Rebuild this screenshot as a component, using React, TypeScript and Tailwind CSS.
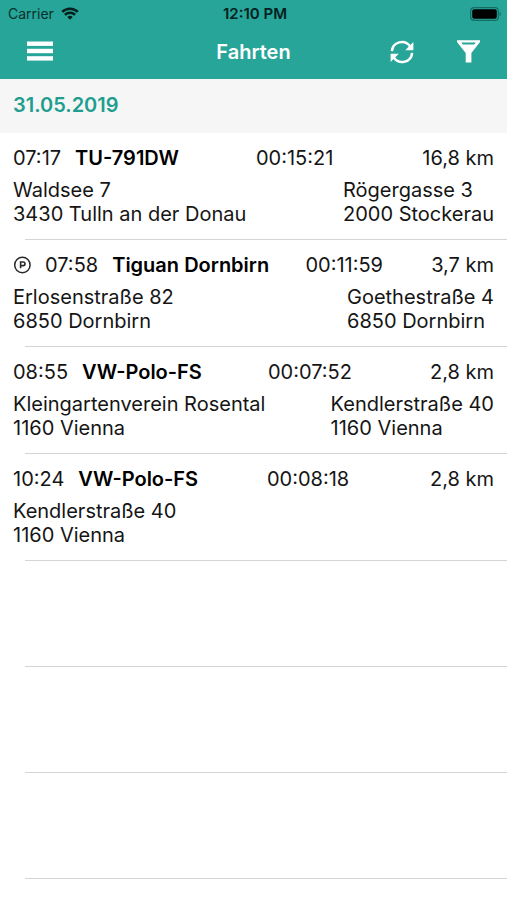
type Trip = {
  time: string;
  vehicle: string;
  duration: string;
  distance: string;
  from: string[];
  to?: string[];
  parked?: boolean;
};

const trips: Trip[] = [
  {
    time: "07:17",
    vehicle: "TU-791DW",
    duration: "00:15:21",
    distance: "16,8 km",
    from: ["Waldsee 7", "3430 Tulln an der Donau"],
    to: ["Rögergasse 3", "2000 Stockerau"],
  },
  {
    time: "07:58",
    vehicle: "Tiguan Dornbirn",
    duration: "00:11:59",
    distance: "3,7 km",
    from: ["Erlosenstraße 82", "6850 Dornbirn"],
    to: ["Goethestraße 4", "6850 Dornbirn"],
    parked: true,
  },
  {
    time: "08:55",
    vehicle: "VW-Polo-FS",
    duration: "00:07:52",
    distance: "2,8 km",
    from: ["Kleingartenverein Rosental", "1160 Vienna"],
    to: ["Kendlerstraße 40", "1160 Vienna"],
  },
  {
    time: "10:24",
    vehicle: "VW-Polo-FS",
    duration: "00:08:18",
    distance: "2,8 km",
    from: ["Kendlerstraße 40", "1160 Vienna"],
  },
];

const emptyRows = [0, 1, 2];

export default function App() {
  return (
    <div className="min-h-screen bg-white font-['Inter',sans-serif] text-[#151515]">
      <header className="bg-[#27a599] pb-[3px]">
        <StatusBar />
        <NavBar />
      </header>
      <main>
        <h2 className="bg-[#f6f6f6] px-[13px] pt-[14px] pb-4 text-[20px] leading-6 font-semibold text-[#1f9e8f]">
          31.05.2019
        </h2>
        <ul>
          {trips.map((trip) => (
            <TripRow key={trip.time} trip={trip} />
          ))}
          {emptyRows.map((row) => (
            <li key={row} className="ml-[25px] h-[106px] border-b border-[#d4d4d6]" />
          ))}
        </ul>
      </main>
    </div>
  );
}

function StatusBar() {
  return (
    <div className="grid h-[27px] grid-cols-3 items-center pr-[5px] pl-2 leading-4 text-[#06302c]">
      <div className="flex items-center gap-[7px]">
        <span className="text-[14px]">Carrier</span>
        <WifiIcon />
      </div>
      <div className="text-center text-[15px] font-semibold text-[#04211e]">12:10 PM</div>
      <div className="flex justify-end">
        <BatteryIcon />
      </div>
    </div>
  );
}

function NavBar() {
  return (
    <nav className="grid h-[49px] grid-cols-3 items-center px-[27px] text-white">
      <button type="button" aria-label="Menü" className="justify-self-start">
        <MenuIcon />
      </button>
      <h1 className="text-center text-[20px] leading-6 font-semibold">Fahrten</h1>
      <div className="flex items-center justify-end gap-[43px]">
        <button type="button" aria-label="Aktualisieren">
          <RefreshIcon />
        </button>
        <button type="button" aria-label="Filter">
          <FilterIcon />
        </button>
      </div>
    </nav>
  );
}

function TripRow({ trip }: { trip: Trip }) {
  return (
    <li className="text-[20px] leading-6">
      <div className="px-[13px] py-[13px]">
        <div className="flex items-center justify-between">
          <div className="flex items-center gap-[14px]">
            {trip.parked && <ParkingIcon />}
            <span>{trip.time}</span>
            <strong className="font-semibold text-black">{trip.vehicle}</strong>
          </div>
          <span className="mr-3">{trip.duration}</span>
          <span>{trip.distance}</span>
        </div>
        <div className="mt-2 flex justify-between">
          <Address lines={trip.from} />
          {trip.to && <Address lines={trip.to} />}
        </div>
      </div>
      <div className="ml-[25px] border-b border-[#d4d4d6]" />
    </li>
  );
}

function Address({ lines }: { lines: string[] }) {
  return (
    <address className="not-italic">
      {lines.map((line) => (
        <div key={line}>{line}</div>
      ))}
    </address>
  );
}

function WifiIcon() {
  return (
    <svg width="18" height="13" viewBox="0 0 18 13" fill="none" stroke="#04211e" strokeWidth="2.5">
      <path d="M1.2 4.9a11 11 0 0 1 15.6 0" />
      <path d="M3.9 7.8a7.2 7.2 0 0 1 10.2 0" />
      <path d="M9 12.8 6.3 10a3.8 3.8 0 0 1 5.4 0z" fill="#04211e" stroke="none" />
    </svg>
  );
}

function BatteryIcon() {
  return (
    <svg width="32" height="14" viewBox="0 0 32 14">
      <rect x="0.7" y="0.7" width="27.6" height="12.6" rx="3.4" fill="none" stroke="#166b62" strokeWidth="1.2" />
      <rect x="2.2" y="2.2" width="24.6" height="9.6" rx="2" fill="#000" />
      <path d="M29.6 4.7c1.6.6 1.6 4 0 4.6z" fill="#166b62" />
    </svg>
  );
}

function MenuIcon() {
  return (
    <svg width="27" height="22" viewBox="0 0 27 22" fill="currentColor">
      <rect y="0.5" width="26" height="4.4" />
      <rect y="7.8" width="26" height="4.4" />
      <rect y="15.2" width="26" height="4.4" />
    </svg>
  );
}

function RefreshIcon() {
  return (
    <svg width="24" height="24" viewBox="0 0 24 24" fill="none" stroke="currentColor" strokeWidth="2.5">
      <path d="M1.9 11.2A10 10 0 0 1 20 6.2" />
      <path d="M22.1 12.8A10 10 0 0 1 4 17.8" />
      <path d="M23.4 2v8.2h-8.2z" fill="currentColor" stroke="none" />
      <path d="M.6 22v-8.2h8.2z" fill="currentColor" stroke="none" />
    </svg>
  );
}

function FilterIcon() {
  return (
    <svg width="23" height="23" viewBox="0 0 23 23" fill="currentColor">
      <path
        fillRule="evenodd"
        d="M0 .3h23v1.6L14.4 13v9.6H8.7V13L0 1.9zM4.2 2.6l1.6 2h11.4l1.6-2z"
      />
    </svg>
  );
}

function ParkingIcon() {
  return (
    <svg width="18" height="18" viewBox="0 0 18 18" fill="none" stroke="#2a2a2a">
      <circle cx="9.4" cy="9" r="7.7" strokeWidth="1.5" />
      <path d="M7.6 12.3V6h2.6a1.8 1.8 0 0 1 0 3.6H7.6" strokeWidth="1.6" />
    </svg>
  );
}
